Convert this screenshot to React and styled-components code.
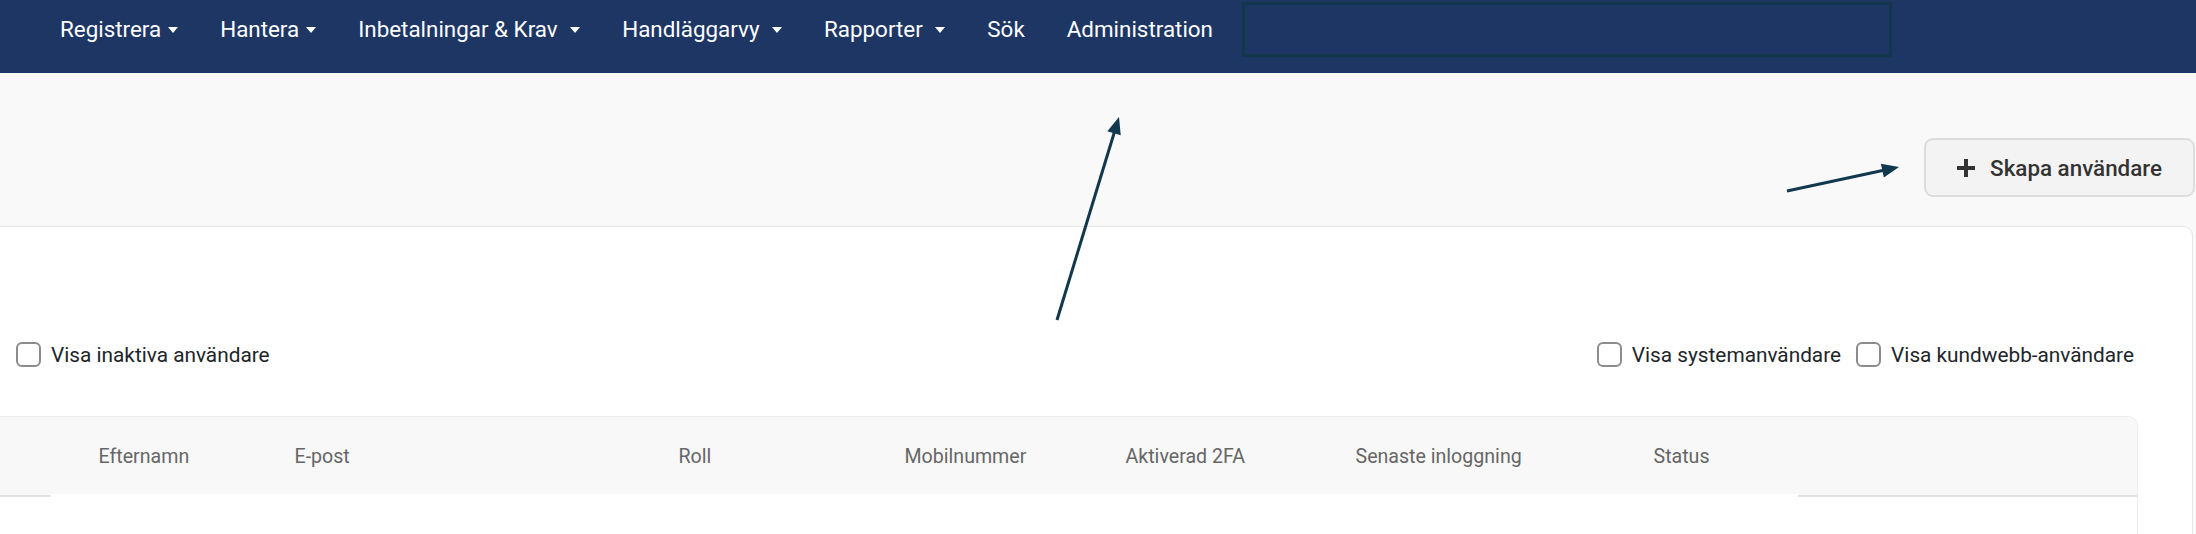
import React from 'react';
import styled, { createGlobalStyle } from 'styled-components';

const GlobalStyle = createGlobalStyle`
	html, body {
		margin: 0;
		padding: 0;
		background: #f9f9f9;
		font-family: Roboto, 'Liberation Sans', sans-serif;
		overflow: hidden;
	}
	* {
		box-sizing: border-box;
	}
`;

const Page = styled.div`
	position: relative;
	width: 2196px;
	height: 534px;
	overflow: hidden;
	background: #f9f9f9;
`;

const Navbar = styled.nav`
	height: 73px;
	background: #1d3664;
	display: flex;
	align-items: flex-start;
	padding: 2px 0 0 39px;
`;

const NavLinks = styled.ul`
	display: flex;
	list-style: none;
	margin: 0;
	padding: 14px 0 0 0;
`;

const NavLink = styled.li`
	display: flex;
	align-items: center;
	padding: 0 21px;
	font-size: 22.4px;
	line-height: 26px;
	color: #fff;
	white-space: nowrap;
`;

const Caret = styled.span`
	display: inline-block;
	margin-left: ${(p) => (p.wide ? 12.5 : 7)}px;
	margin-top: 2px;
	border-top: 6px solid #fff;
	border-left: 5px solid transparent;
	border-right: 5px solid transparent;
`;

const SearchBox = styled.div`
	margin-left: 8px;
	width: 650px;
	height: 55px;
	border: 3px solid #13364a;
`;

const Toolbar = styled.div`
	height: 153px;
	display: flex;
	justify-content: flex-end;
	align-items: flex-start;
	padding: 65px 1px 0 0;
`;

const CreateButton = styled.button`
	display: flex;
	align-items: center;
	gap: 14px;
	height: 59px;
	padding: 0 31px 0 30px;
	background: #f3f3f3;
	border: 2px solid #dcdcdc;
	border-radius: 9px;
	font-family: Roboto, 'Liberation Sans', sans-serif;
	font-size: 22.4px;
	font-weight: 500;
	color: #333;
`;

const Card = styled.section`
	margin: 0 3px 0 -40px;
	height: 320px;
	background: #fff;
	border: 1px solid #e6e6e6;
	border-radius: 10px;
	padding-right: 54px;
`;

const FilterRow = styled.div`
	display: flex;
	justify-content: space-between;
	align-items: center;
	height: 25px;
	margin-top: 115px;
	padding-left: 55px;
	margin-bottom: 49px;
`;

const CheckGroup = styled.div`
	display: flex;
	align-items: center;
	gap: 15px;
	padding-right: ${(p) => p.padRight || 0}px;
`;

const CheckLabel = styled.label`
	display: flex;
	align-items: center;
	gap: 10px;
	font-size: 20.8px;
	color: #212529;
	white-space: nowrap;
`;

const CheckBox = styled.span`
	width: 25px;
	height: 25px;
	border: 2px solid #8c8c8c;
	border-radius: 6px;
	background: #fff;
`;

const Table = styled.div`
	border: 1px solid #ececec;
	border-left: none;
	border-bottom: none;
	border-radius: 0 10px 0 0;
	height: 200px;
`;

const HeaderRow = styled.div`
	display: grid;
	grid-template-columns: 137.5px 196px 384px 226px 221px 230px 298px 1fr;
	align-items: center;
	height: 80px;
	background: #f8f8f8;
	border-bottom: 2px solid #e2e2e2;
	border-radius: 0 10px 0 0;
`;

const HeadCell = styled.div`
	font-size: 19.6px;
	color: #666;
	white-space: nowrap;
`;

const BodyArea = styled.div`
	position: relative;
	margin: -3px 0 0 90px;
	width: 1747px;
	height: 60px;
	background: #fff;
`;

const ArrowLayer = styled.svg`
	position: absolute;
	left: 0;
	top: 0;
	pointer-events: none;
`;

const Plus = () => (
	<svg width='20' height='20' viewBox='0 0 20 20'>
		<path d='M10 1v18M1 10h18' stroke='#333' strokeWidth='4' />
	</svg>
);

const arrowHead = (x1, y1, x2, y2, len = 17, half = 7) => {
	const dx = x2 - x1;
	const dy = y2 - y1;
	const d = Math.hypot(dx, dy);
	const ux = dx / d;
	const uy = dy / d;
	const bx = x2 - ux * len;
	const by = y2 - uy * len;
	return `${x2},${y2} ${bx - uy * half},${by + ux * half} ${bx + uy * half},${by - ux * half}`;
};

const Arrow = ({ from, to }) => {
	const [x1, y1] = from;
	const [x2, y2] = to;
	const d = Math.hypot(x2 - x1, y2 - y1);
	const ex = x2 - ((x2 - x1) / d) * 12;
	const ey = y2 - ((y2 - y1) / d) * 12;
	return (
		<g>
			<line x1={x1} y1={y1} x2={ex} y2={ey} stroke='#12384d' strokeWidth='3' />
			<polygon points={arrowHead(x1, y1, x2, y2)} fill='#12384d' />
		</g>
	);
};

const navItems = [
	{ label: 'Registrera', caret: 'narrow' },
	{ label: 'Hantera', caret: 'narrow' },
	{ label: 'Inbetalningar & Krav', caret: 'wide' },
	{ label: 'Handläggarvy', caret: 'wide' },
	{ label: 'Rapporter', caret: 'wide' },
	{ label: 'Sök' },
	{ label: 'Administration' },
];

const columns = [
	'',
	'Efternamn',
	'E-post',
	'Roll',
	'Mobilnummer',
	'Aktiverad 2FA',
	'Senaste inloggning',
	'Status',
];

const Check = ({ children }) => (
	<CheckLabel>
		<CheckBox />
		{children}
	</CheckLabel>
);

export default function App() {
	return (
		<Page>
			<GlobalStyle />
			<Navbar>
				<NavLinks>
					{navItems.map((item) => (
						<NavLink key={item.label}>
							{item.label}
							{item.caret && <Caret wide={item.caret === 'wide'} />}
						</NavLink>
					))}
				</NavLinks>
				<SearchBox />
			</Navbar>
			<Toolbar>
				<CreateButton>
					<Plus />
					Skapa användare
				</CreateButton>
			</Toolbar>
			<Card>
				<FilterRow>
					<Check>Visa inaktiva användare</Check>
					<CheckGroup padRight={4}>
						<Check>Visa systemanvändare</Check>
						<Check>Visa kundwebb-användare</Check>
					</CheckGroup>
				</FilterRow>
				<Table>
					<HeaderRow>
						{columns.map((c, i) => (
							<HeadCell key={i}>{c}</HeadCell>
						))}
					</HeaderRow>
					<BodyArea />
				</Table>
			</Card>
			<ArrowLayer width='2196' height='534'>
				<Arrow from={[1057, 320]} to={[1119, 117]} />
				<Arrow from={[1787, 191]} to={[1899, 167]} />
			</ArrowLayer>
		</Page>
	);
}
